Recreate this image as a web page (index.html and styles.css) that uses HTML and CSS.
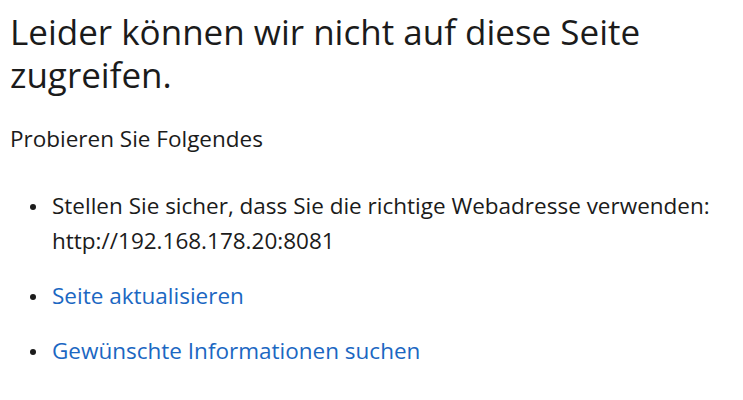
FILE: index.html
```html
<!DOCTYPE html>
<html lang="de">
  <head>
    <meta charset="UTF-8" />
    <meta name="viewport" content="width=device-width, initial-scale=1.0" />
    <title>Kein Zugriff</title>
    <link rel="stylesheet" href="styles.css">
  </head>

  <body>
    <div class="error-page">
      <h1 class="title">Leider können wir nicht auf diese Seite zugreifen.</h1>
      <p class="subtitle">Probieren Sie Folgendes</p>
      <ul class="tips">
        <li>Stellen Sie sicher, dass Sie die richtige Webadresse verwenden: http://192.168.178.20:8081</li>
        <li><a href="#">Seite aktualisieren</a></li>
        <li><a href="#">Gewünschte Informationen suchen</a></li>
      </ul>
    </div>
  </body>
</html>
```

FILE: styles.css
```css
* {
  margin: 0;
  padding: 0;
  font-family: "Open Sans", "Noto Sans", sans-serif;
}

body {
  background: #fff;
  color: #1b1b1b;
}

.error-page {
  padding: 10px 10px 0 10px;
}

.title {
  font-size: 35px;
  font-weight: 400;
  line-height: 43px;
  width: 700px;
}

.subtitle {
  margin-top: 28px;
  font-size: 22.5px;
  line-height: 30px;
}

.tips {
  margin-top: 34px;
  list-style: none;
  font-size: 22.5px;
  line-height: 35px;
}

.tips li {
  position: relative;
  padding-left: 42px;
  margin-bottom: 20px;
}

.tips li::before {
  content: "";
  position: absolute;
  left: 20px;
  top: 16px;
  width: 6px;
  height: 6px;
  border-radius: 50%;
  background: #1b1b1b;
}

.tips a {
  color: #1b67c2;
  text-decoration: none;
}
```
